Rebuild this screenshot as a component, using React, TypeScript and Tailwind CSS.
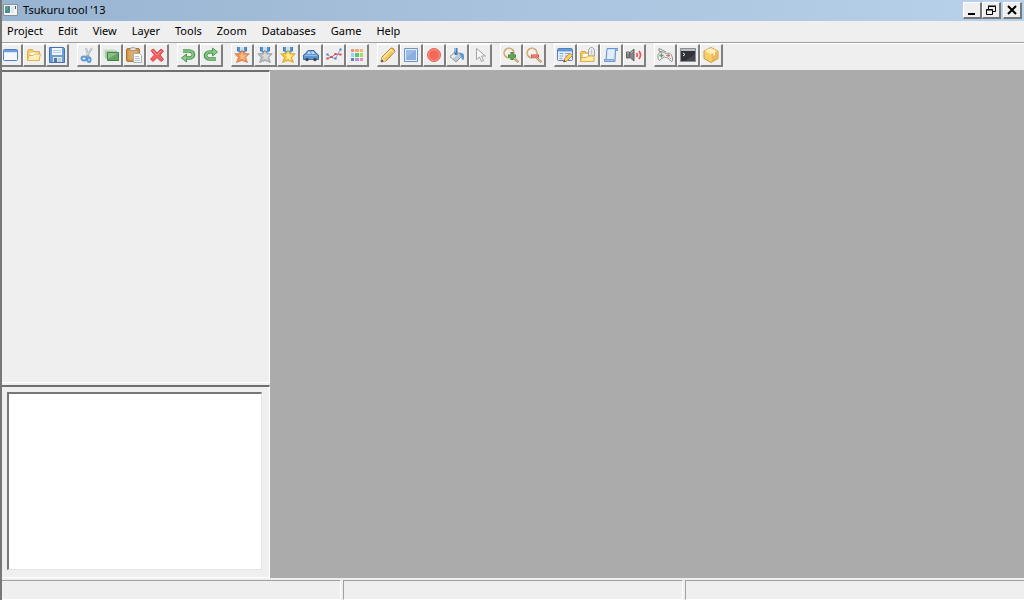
import type { ReactNode } from 'react';

interface Tool {
  label: string;
  icon: ReactNode;
}

const menus = ['Project', 'Edit', 'View', 'Layer', 'Tools', 'Zoom', 'Databases', 'Game', 'Help'];

function Icon({ children }: { children: ReactNode }) {
  return (
    <svg viewBox="0 0 16 16" className="block size-4 shrink-0" fill="none" aria-hidden="true">
      {children}
    </svg>
  );
}

function Medal({ fill, light, stroke }: { fill: string; light: string; stroke: string }) {
  return (
    <Icon>
      <path d="M3 0h10v4l-3 2H6L3 4z" fill="#5b93c6" />
      <path d="M6 0h4v4H6z" fill="#c9e2f3" />
      <path d="M3.500 0v4M12.500 0v4" stroke="#3f77ab" />
      <path d="M8 3l2 3.500 5.200.3-3.500 3.700 1.800 5L8 13.500l-5.500 2 1.800-5L.8 6.800 6 6.500z" fill={fill} stroke={stroke} strokeWidth=".7" strokeLinejoin="round" />
      <path d="M8 4.500l1.600 3.200 3.400.3-2.600 2.200.8 3L8 11.800l-2.200.8 1-3L4.500 8l2.300-.3z" fill={light} />
    </Icon>
  );
}

function Magnifier({ children }: { children: ReactNode }) {
  return (
    <Icon>
      <path d="M10 10l4.500 4.500" stroke="#a97a49" strokeWidth="2.400" strokeLinecap="round" />
      <path d="M10 10l4.500 4.500" stroke="#e8c08c" strokeWidth="1.200" strokeLinecap="round" />
      <circle cx="6" cy="6" r="4.800" fill="#f3f1e7" stroke="#bd8a52" strokeWidth="1.500" />
      <circle cx="6" cy="6" r="4.700" stroke="#e8c898" strokeWidth=".7" />
      {children}
    </Icon>
  );
}

const groups: Tool[][] = [
  [
    {
      label: 'New project',
      icon: (
        <Icon>
          <rect x=".5" y="2.500" width="14" height="11" rx="1" fill="#f4f8fe" stroke="#4f7fc0" />
          <path d="M1 3h13v2H1z" fill="#6b9ee6" />
          <path d="M1.500 5.500h12" stroke="#d5e5fa" />
        </Icon>
      ),
    },
    {
      label: 'Open project',
      icon: (
        <Icon>
          <path d="M1.500 13.500v-10l1-1h4l1 2h6v9z" fill="#f5ca69" stroke="#e2b04c" />
          <path d="M4 5.500h8v4H4z" fill="#fff" stroke="#ecd8aa" strokeWidth=".6" />
          <path d="M1.500 13.500l1.500-5h4l1.500-1.500h6l-1.500 6.500z" fill="#fdf0b8" stroke="#e5b44f" />
        </Icon>
      ),
    },
    {
      label: 'Save project',
      icon: (
        <Icon>
          <path d="M.5.5h14l1 1v14H.5z" fill="#6c9ddd" stroke="#4270b5" />
          <path d="M3 1h10v7H3z" fill="#f2f7fd" />
          <path d="M4 3.500h8M4 5.500h8" stroke="#b5cdea" />
          <path d="M4 10h9v5H4z" fill="#dfe7dc" />
          <path d="M5 11h3v4H5z" fill="#4f76a8" />
          <path d="M9 11h3v4H9z" fill="#c0cfc4" />
        </Icon>
      ),
    },
  ],
  [
    {
      label: 'Cut',
      icon: (
        <Icon>
          <path d="M6 1l2.500 9M12 1L6.500 10" stroke="#9babb6" strokeWidth="1.900" />
          <path d="M6 1l2 7M12 1L8.500 7" stroke="#e2e9ed" strokeWidth=".8" />
          <ellipse cx="4" cy="11.500" rx="2.500" ry="2" stroke="#5a98d3" strokeWidth="1.900" />
          <ellipse cx="9" cy="12.800" rx="1.600" ry="2.300" stroke="#5a98d3" strokeWidth="1.900" />
        </Icon>
      ),
    },
    {
      label: 'Copy',
      icon: (
        <Icon>
          <path d="M0 2h12v8H0z" fill="#d9e7da" />
          <path d="M2 3.500h12v8H2z" fill="#a9cdaa" />
          <path d="M4.500 5.500h11v8h-11z" fill="#62a262" stroke="#3f853f" />
          <path d="M5 6h10L5 12z" fill="#8bc08a" />
        </Icon>
      ),
    },
    {
      label: 'Paste',
      icon: (
        <Icon>
          <rect x=".5" y="1.500" width="13" height="13" rx="1.500" fill="#cf9145" stroke="#ad7331" />
          <path d="M2.500 3.500h9v9h-9z" fill="#e0aa64" />
          <path d="M4 3.500V1.500l2-1h2l2 1v2z" fill="#dedede" stroke="#929292" strokeWidth=".7" />
          <path d="M7.500 6.500h6l2 2v7h-8z" fill="#f8fafc" stroke="#a2aeb9" />
          <path d="M9 9.500h4M9 11.500h5M9 13.500h5" stroke="#b7c2cc" />
        </Icon>
      ),
    },
    {
      label: 'Delete',
      icon: (
        <Icon>
          <path d="M2 3.500L4.500 2 8 6l4-4 2.500 2L11 8l3.500 4.500L12 14.500 8 10.500l-4 4L1.500 12 5.500 8z" fill="#f2605f" stroke="#dc4249" strokeLinejoin="round" />
          <path d="M3.500 3.500L8 8l4-4" stroke="#fb9690" />
        </Icon>
      ),
    },
  ],
  [
    {
      label: 'Undo',
      icon: (
        <Icon>
          <path d="M3 4h6c6 0 6 7 0 7H6" stroke="#4a964e" strokeWidth="3.600" />
          <path d="M6.500 7L1.500 11l5 4z" fill="#8cc98c" stroke="#4a964e" strokeLinejoin="round" />
          <path d="M3 4h6c5.500 0 5.500 7 0 7H5" stroke="#8bc98b" strokeWidth="1.700" />
        </Icon>
      ),
    },
    {
      label: 'Redo',
      icon: (
        <Icon>
          <path d="M13 12H7C1 12 1 5 7 5h3" stroke="#4a964e" strokeWidth="3.600" />
          <path d="M9.500 1l5 4-5 4z" fill="#8cc98c" stroke="#4a964e" strokeLinejoin="round" />
          <path d="M13 12H7c-5.500 0-5.500-7 0-7h4" stroke="#8bc98b" strokeWidth="1.700" />
        </Icon>
      ),
    },
  ],
  [
    { label: 'Heroes', icon: <Medal fill="#ee8f50" light="#ffb884" stroke="#d07a4a" /> },
    { label: 'Monsters', icon: <Medal fill="#b9bcbf" light="#d8dadc" stroke="#8d9297" /> },
    { label: 'Items', icon: <Medal fill="#f2c23c" light="#ffeb8c" stroke="#d19b33" /> },
    {
      label: 'Vehicles',
      icon: (
        <Icon>
          <path d="M.5 8l2-1.500L5 3.500h6l2.500 3 2 1.500v4.500H.5z" fill="#6096d0" stroke="#3d6ca6" strokeLinejoin="round" />
          <path d="M5.500 4.500h2V7H4zM8.500 4.500h2L12 7H8.500z" fill="#c2dbf0" />
          <path d="M2 8.500h12" stroke="#91bde6" />
          <circle cx="4" cy="12.500" r="1.700" fill="#40454b" />
          <circle cx="12" cy="12.500" r="1.700" fill="#40454b" />
        </Icon>
      ),
    },
    {
      label: 'Curves',
      icon: (
        <Icon>
          <path d="M1.500 7.500l4 3 4 1 5-9" stroke="#7ba5da" />
          <path d="M1.500 11.500l4-1.500 4-3 5 .5" stroke="#e05a61" />
          <path d="M1 7h1v1H1zM9 11h1v1H9zM14 2h1v1h-1z" fill="#b9d4f1" stroke="#4f84c3" strokeWidth="1.200" />
          <path d="M1 11h1v1H1zM5 9.500h1v1H5zM9 6.500h1v1H9zM14 7h1v1h-1z" fill="#f9a9aa" stroke="#d84c56" strokeWidth="1.200" />
        </Icon>
      ),
    },
    {
      label: 'Palette',
      icon: (
        <Icon>
          <path d="M2 2h3v3H2z" fill="#f0917a" />
          <path d="M6 2h4v3H6z" fill="#f5a77d" />
          <path d="M11 2h3v3h-3z" fill="#f3ba6c" />
          <path d="M2 6h3v4H2z" fill="#9ed2f0" />
          <path d="M6 6h4v4H6z" fill="#56c969" />
          <path d="M11 6h3v4h-3z" fill="#a5dd6b" />
          <path d="M2 11h3v3H2z" fill="#5a83bd" />
          <path d="M6 11h4v3H6z" fill="#bb91d0" />
          <path d="M11 11h3v3h-3z" fill="#d995c5" />
        </Icon>
      ),
    },
  ],
  [
    {
      label: 'Pencil',
      icon: (
        <Icon>
          <path d="M1 15l1-5L11 1l2.500.5L15 4.500 6 14z" fill="#f2c65a" stroke="#b88439" strokeLinejoin="round" />
          <path d="M3.500 10.500l8-8" stroke="#ffeea5" strokeWidth="1.500" />
          <path d="M2 10l4 4-5 1z" fill="#f5dab1" />
          <path d="M1 15l.7-2.700 2 2z" fill="#303030" />
          <path d="M10.500 2.500l3 3" stroke="#fbecbc" />
        </Icon>
      ),
    },
    {
      label: 'Rectangle',
      icon: (
        <Icon>
          <path d="M1.500 1.500h13v13h-13z" fill="#e6effa" stroke="#6a94cd" />
          <path d="M3 3h10v10H3z" fill="#8aafe0" />
          <path d="M3 3h10L3 11z" fill="#9dbce8" />
        </Icon>
      ),
    },
    {
      label: 'Ellipse',
      icon: (
        <Icon>
          <circle cx="8" cy="8" r="6.500" fill="#f2695a" stroke="#e0655d" />
          <circle cx="8" cy="8" r="5.400" stroke="#ff9c86" strokeWidth=".8" />
        </Icon>
      ),
    },
    {
      label: 'Fill',
      icon: (
        <Icon>
          <path d="M1 9.500l6-5.500 6 5-6 6z" fill="#c0c8d0" stroke="#8f9aa4" strokeLinejoin="round" />
          <path d="M2 9.500L7 5l2 2-5 4.500z" fill="#eceff2" />
          <path d="M10 5.500l3 .5c2.500 1 2.500 4 1.500 7-2 0-2-2-2.500-4z" fill="#5b98d8" />
          <path d="M5.500 1h3v7h-3z" fill="#447dbb" />
          <path d="M6.500 1v4" stroke="#91bee5" />
        </Icon>
      ),
    },
    {
      label: 'Select',
      icon: (
        <Icon>
          <path d="M4.500 1.500v11l3-2.500 2 4.500 2-1-2-4.500h4z" fill="#f7f7f7" stroke="#a3a3a3" strokeLinejoin="round" />
        </Icon>
      ),
    },
  ],
  [
    {
      label: 'Zoom in',
      icon: (
        <Magnifier>
          <path d="M9 5v8M5 9h8" stroke="#3f893f" strokeWidth="3" />
          <path d="M9 6v6M6 9h6" stroke="#71ba64" />
        </Magnifier>
      ),
    },
    {
      label: 'Zoom out',
      icon: (
        <Magnifier>
          <path d="M5 9h8" stroke="#e3474a" strokeWidth="3" />
          <path d="M6 9h6" stroke="#ffaaa2" />
        </Magnifier>
      ),
    },
  ],
  [
    {
      label: 'Database editor',
      icon: (
        <Icon>
          <rect x=".5" y="1.500" width="15" height="12" rx="1" fill="#e8f1fb" stroke="#527fbd" />
          <path d="M1 2h14v2.500H1z" fill="#6697d6" />
          <path d="M2.500 6.500h4M2.500 9h4M2.500 11.500h3M8 6.500h5M8 9h2" stroke="#8aa7ca" />
          <path d="M6.500 15l1-3.500L13 6l2.500 2.500-5.500 5.500z" fill="#f5cd66" stroke="#c98f45" />
          <path d="M6.500 15l.7-2 1.500 1.500z" fill="#343434" />
        </Icon>
      ),
    },
    {
      label: 'Resources',
      icon: (
        <Icon>
          <path d="M.5 14.500v-9l1-1h4l1 1.500h7v8.500z" fill="#f2c45c" stroke="#dca444" />
          <path d="M3 7h9v4H3z" fill="#fff" />
          <path d="M8.500 9V2.500l2-2h2l2 2V9z" fill="#e3e5e7" stroke="#a3a7ab" />
          <path d="M11.500 3v4" stroke="#c3c6c9" />
          <path d="M.5 14.500l1-4h5l1-1.500H14v5.500z" fill="#fdeaa6" stroke="#dfac4c" />
        </Icon>
      ),
    },
    {
      label: 'Scripts',
      icon: (
        <Icon>
          <path d="M4 1.500h10.500v2h-2L12 14.500H1.500v-2H3z" fill="#c4def9" stroke="#6794d0" strokeLinejoin="round" />
          <path d="M5 2.500h6.500l-1 9.500H4z" fill="#e0edfc" />
          <path d="M1.500 12.500h9v2h-9zM12.500 1.500h2v2h-2z" fill="#a5c8f1" stroke="#6794d0" strokeWidth=".8" />
        </Icon>
      ),
    },
    {
      label: 'Sound',
      icon: (
        <Icon>
          <path d="M.5 5h3v6h-3zM3.500 6L8 2v12l-4.500-4z" fill="#858585" stroke="#626262" strokeLinejoin="round" />
          <path d="M1 6h2M5 6l2-2" stroke="#bababa" />
          <path d="M10.500 6q1.500 2 0 4" stroke="#ef5960" strokeWidth="1.700" />
          <path d="M13 4q3 4 0 8" stroke="#ed5158" strokeWidth="1.700" />
        </Icon>
      ),
    },
  ],
  [
    {
      label: 'Play game',
      icon: (
        <Icon>
          <path d="M5 5L2 4V1.500L9 5" stroke="#8a8a8a" />
          <path d="M1 11.500Q0 8 2.500 5.500L6 5l3 1.500 3.500-.5 2 2q1.500 3 1 6l-1.500.5-3-3.500-3.500-1L5 11.500l-2.500 2z" fill="#ececec" stroke="#9a9a9a" strokeLinejoin="round" />
          <path d="M2.500 8.500h4M4.500 6.500v4" stroke="#5ca45c" strokeWidth="1.400" />
          <circle cx="11.500" cy="8.500" r="1.300" fill="#e35454" />
          <path d="M9 8h1v1H9zM13 11h1v1h-1z" fill="#7a9dcb" />
        </Icon>
      ),
    },
    {
      label: 'Console',
      icon: (
        <Icon>
          <path d="M.5 1.500h15v13H.5z" fill="#303238" stroke="#8a8c90" />
          <path d="M1 2h14v2H1z" fill="#b9bdc5" />
          <path d="M3 6l2 1.500L3 9" stroke="#eee" />
          <path d="M5 14l10-7v7z" fill="#45474d" />
        </Icon>
      ),
    },
    {
      label: 'Package game',
      icon: (
        <Icon>
          <path d="M8 .5l7 3.500v7.500L8 15.500 1 11.500V4z" fill="#f5cd69" stroke="#cf9d40" strokeLinejoin="round" />
          <path d="M1.500 4L8 1l6.500 3L8 7.500z" fill="#ffeab0" />
          <path d="M8 7.500L14.500 4v7L8 15z" fill="#eeb957" />
          <path d="M4 2.500l6.500 3.500v3L12 8V5L6 2z" fill="#fff6cf" />
          <path d="M8 7.500V15" stroke="#f8d37c" />
        </Icon>
      ),
    },
  ],
];

const windowButton =
  'flex h-[17px] w-[19px] items-center justify-center border-t border-l border-r-2 border-b-2 border-t-white border-l-white border-r-[#777] border-b-[#777] bg-[#efefef]';

export default function App() {
  return (
    <div className="flex h-screen flex-col overflow-hidden border-l-2 border-[#777] bg-[#efefef] font-['Noto_Sans','Open_Sans',sans-serif] text-[11px] text-black">
      <header className="flex h-[21px] shrink-0 items-center bg-linear-to-r from-[#99b4d1] to-[#b9d1ea] pr-[2px]">
        <svg viewBox="0 0 16 14" className="h-3.5 w-4" aria-hidden="true">
          <path d="M1.500.5h14v11h-14z" fill="#f5f5f5" stroke="#8a9096" />
          <path d="M3 2h5v7H3z" fill="#4b8a8c" />
          <path d="M3 2h3v4H3z" fill="#5da17c" />
          <path d="M9 2h3v7H9z" fill="#dce7ee" />
          <path d="M13 2h1v3h-1z" fill="#3c596f" />
        </svg>
        <h1 className="ml-[5px] text-[11px]">Tsukuru tool '13</h1>
        <div className="ml-auto flex">
          <button aria-label="Minimize" className={windowButton}>
            <svg viewBox="0 0 12 12" className="size-3"><path d="M2 9h7v2H2z" /></svg>
          </button>
          <button aria-label="Restore" className={windowButton}>
            <svg viewBox="0 0 12 12" className="size-3" fill="none" stroke="#000">
              <path d="M3.500 5V2.500h7v5H8M3 2h8M1.500 5.500h6v5h-6zM1 6h7" />
            </svg>
          </button>
          <button aria-label="Close" className={`${windowButton} ml-[2px]`}>
            <svg viewBox="0 0 12 12" className="size-3"><path d="M2 2l8 8M10 2l-8 8" stroke="#000" strokeWidth="2" /></svg>
          </button>
        </div>
      </header>

      <nav aria-label="Main menu" className="flex h-[21px] shrink-0 items-center gap-[15px] px-[5px]">
        {menus.map((menu) => (
          <button key={menu}>{menu}</button>
        ))}
      </nav>

      <div role="toolbar" aria-label="Tools" className="flex h-7 shrink-0 gap-2 border-t border-[#a0a0a0]">
        {groups.map((group, index) => (
          <div key={index} className="flex border-t border-white first:-ml-[2px]">
            {group.map((tool) => (
              <button
                key={tool.label}
                aria-label={tool.label}
                title={tool.label}
                className="flex h-[23px] w-[23px] items-center justify-center border-t border-l border-r-2 border-b-2 border-t-white border-l-white border-r-[#808080] border-b-[#808080]"
              >
                {tool.icon}
              </button>
            ))}
          </div>
        ))}
        <div className="-ml-2 flex-1 border-t border-white" />
      </div>

      <div className="flex min-h-0 flex-1">
        <aside className="flex w-[268px] shrink-0 flex-col">
          <section aria-label="Tileset" className="flex-1 border-t-2 border-r border-b border-t-[#6f6f6f] border-r-white border-b-white" />
          <section aria-label="Maps" className="mt-0.5 h-[193px] border-t-2 border-r border-b border-t-[#6f6f6f] border-r-white border-b-white p-[5px] pr-[7px] pb-[7px]">
            <div className="h-full border-t-2 border-l-2 border-r border-b border-t-[#777] border-l-[#777] border-r-[#e3e3e3] border-b-[#e3e3e3] bg-white" />
          </section>
        </aside>
        <main className="flex-1 bg-[#ababab]" />
      </div>

      <footer className="grid h-[22px] shrink-0 grid-cols-3 gap-0.5 pt-0.5">
        <div className="border-t border-r border-b border-t-[#a0a0a0] border-r-white border-b-white" />
        <div className="border border-t-[#a0a0a0] border-r-white border-b-white border-l-[#a0a0a0]" />
        <div className="border-t border-b border-l border-t-[#a0a0a0] border-b-white border-l-[#a0a0a0]" />
      </footer>
    </div>
  );
}
